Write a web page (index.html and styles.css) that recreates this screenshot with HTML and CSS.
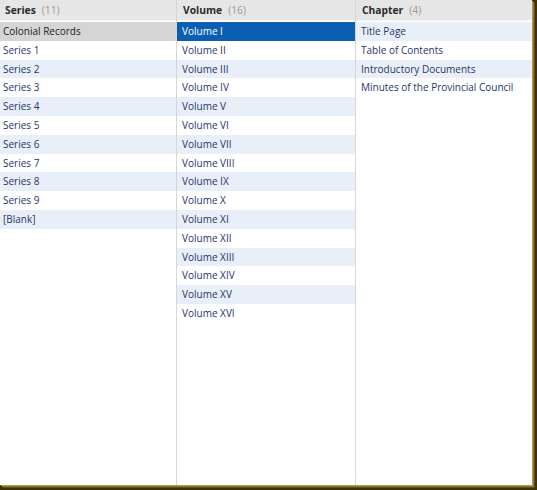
FILE: index.html
```html
<!DOCTYPE html>
<html>
<head>
<meta charset="utf-8">
<link rel="stylesheet" href="styles.css">
</head>
<body>
<div class="browser">
  <div class="col col-series">
    <div class="head"><span class="title">Series</span><span class="count">(11)</span></div>
    <ul class="list">
      <li class="item sel-gray">Colonial Records</li>
      <li class="item">Series 1</li>
      <li class="item alt">Series 2</li>
      <li class="item">Series 3</li>
      <li class="item alt">Series 4</li>
      <li class="item">Series 5</li>
      <li class="item alt">Series 6</li>
      <li class="item">Series 7</li>
      <li class="item alt">Series 8</li>
      <li class="item">Series 9</li>
      <li class="item alt">[Blank]</li>
    </ul>
  </div>
  <div class="col col-volume">
    <div class="head"><span class="title">Volume</span><span class="count">(16)</span></div>
    <ul class="list">
      <li class="item sel-blue">Volume I</li>
      <li class="item">Volume II</li>
      <li class="item alt">Volume III</li>
      <li class="item">Volume IV</li>
      <li class="item alt">Volume V</li>
      <li class="item">Volume VI</li>
      <li class="item alt">Volume VII</li>
      <li class="item">Volume VIII</li>
      <li class="item alt">Volume IX</li>
      <li class="item">Volume X</li>
      <li class="item alt">Volume XI</li>
      <li class="item">Volume XII</li>
      <li class="item alt">Volume XIII</li>
      <li class="item">Volume XIV</li>
      <li class="item alt">Volume XV</li>
      <li class="item">Volume XVI</li>
    </ul>
  </div>
  <div class="col col-chapter">
    <div class="head"><span class="title">Chapter</span><span class="count">(4)</span></div>
    <ul class="list">
      <li class="item alt">Title Page</li>
      <li class="item">Table of Contents</li>
      <li class="item alt">Introductory Documents</li>
      <li class="item">Minutes of the Provincial Council</li>
    </ul>
  </div>
</div>
</body>
</html>
```

FILE: styles.css
```css
html, body {
  margin: 0;
  padding: 0;
  background: #3c3210;
  overflow: hidden;
}
body {
  width: 537px;
  height: 490px;
}
.browser {
  width: 532px;
  height: 485px;
  display: grid;
  grid-template-columns: 176px 178px 176px;
  column-gap: 1px;
  background: #d6d6d6;
  box-shadow: 1px 1px 0 0 #b39a45, 2px 2px 0 0 #8d7629, 3px 3px 0 0 #5e4e18;
  font-family: "Open Sans", "Noto Sans", sans-serif;
  font-size: 10px;
}
.col {
  background: #ffffff;
  display: flex;
  flex-direction: column;
}
.head {
  height: 21px;
  box-sizing: border-box;
  background: #e6e6e6;
  border-bottom: 1px solid #f4f4f4;
  padding-left: 5px;
  display: flex;
  align-items: center;
  gap: 6px;
  color: #2b2b2b;
  font-size: 10.3px;
}
.col-volume .head, .col-chapter .head { padding-left: 6px; }
.title { font-weight: 700; }
.count { color: #999999; }
.list {
  list-style: none;
  margin: 1px 0 0 0;
  padding: 0;
}
.item {
  height: 18.8px;
  line-height: 18.8px;
  padding-left: 5px;
  color: #1f356c;
  white-space: nowrap;
}
.col-series .item { padding-left: 3px; }
.alt { background: #e9eff8; }
.sel-gray { background: #d5d5d5; color: #1a1a1a; }
.sel-blue { background: #0b5fb3; color: #ffffff; }
```
